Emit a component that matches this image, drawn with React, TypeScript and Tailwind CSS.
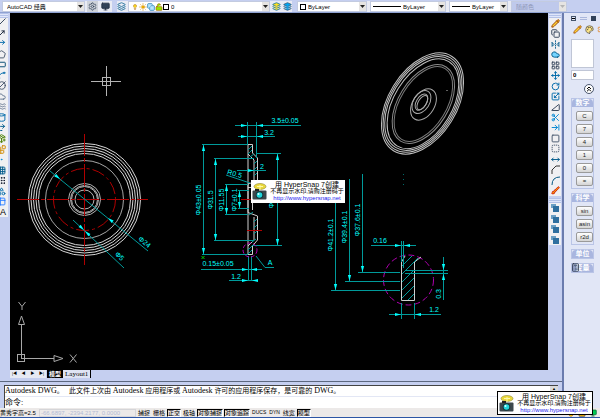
import React from "react";
import {
  Slash, MoveUpRight, CornerUpRight, Pentagon, RectangleHorizontal, Spline, CircleSlash2, Cloud, Waves, Cylinder,
  Redo2, PackagePlus, Blocks, Dot, Grid3x3, Grip, Shapes, Table2, Copy, FlipHorizontal2, Layers, LayoutGrid,
  Move, RotateCw, Scaling, TriangleRight, Scissors, ArrowRightToLine, SquareDashed, Square, MoveHorizontal,
  Brush, Settings, Monitor, Lightbulb, Sun, LockOpen, Palette, ChevronsUp, Calculator, Pencil, Shield,
} from "lucide-react";

const drawTools = [
  { name: "Line", icon: Slash, color: "text-slate-700" },
  { name: "Construction line", icon: MoveUpRight, color: "text-slate-800" },
  { name: "Polyline", icon: CornerUpRight, color: "text-sky-700" },
  { name: "Polygon", icon: Pentagon, color: "text-slate-600" },
  { name: "Rectangle", icon: RectangleHorizontal, color: "text-sky-900" },
  { name: "Arc", icon: Spline, color: "text-sky-700" },
  { name: "Circle", icon: CircleSlash2, color: "text-slate-600" },
  { name: "Revision cloud", icon: Cloud, color: "text-slate-500" },
  { name: "Spline", icon: Waves, color: "text-slate-500" },
  { name: "Ellipse", icon: Cylinder, color: "text-sky-700" },
  { name: "Ellipse arc", icon: Redo2, color: "text-sky-800" },
  { name: "Insert block", icon: PackagePlus, color: "text-lime-700" },
  { name: "Make block", icon: Blocks, color: "text-yellow-600" },
  { name: "Point", icon: Dot, color: "text-sky-600" },
  { name: "Hatch", icon: Grid3x3, color: "text-sky-800" },
  { name: "Gradient", icon: Grip, color: "text-slate-900" },
  { name: "Region", icon: Shapes, color: "text-sky-700" },
  { name: "Table", icon: Table2, color: "text-blue-500" },
];

const modifyTools = [
  { name: "Erase", icon: Pencil, color: "fill-amber-300 text-amber-800" },
  { name: "Copy", icon: Copy, color: "text-slate-700" },
  { name: "Mirror", icon: FlipHorizontal2, color: "text-sky-800" },
  { name: "Offset", icon: Cloud, color: "fill-sky-300 text-sky-800" },
  { name: "Array", icon: LayoutGrid, color: "text-slate-700" },
  { name: "Move", icon: Move, color: "text-sky-700" },
  { name: "Rotate", icon: RotateCw, color: "text-sky-700" },
  { name: "Scale", icon: Scaling, color: "text-sky-700" },
  { name: "Stretch", icon: TriangleRight, color: "text-slate-700" },
  { name: "Trim", icon: Scissors, color: "text-sky-600" },
  { name: "Extend", icon: ArrowRightToLine, color: "text-sky-600" },
  { name: "Break at point", icon: Square, color: "text-slate-600" },
  { name: "Break", icon: SquareDashed, color: "text-slate-600" },
  { name: "Join", icon: MoveHorizontal, color: "text-sky-800" },
];

const orderTools = ["Bring to front", "Send to back", "Bring above", "Send under"];

const statusButtons = [
  { label: "捕捉", on: false },
  { label: "栅格", on: false },
  { label: "正交", on: true },
  { label: "极轴", on: false },
  { label: "对象捕捉", on: true },
  { label: "对象追踪", on: true },
  { label: "DUCS", on: false },
  { label: "DYN", on: false },
  { label: "线宽", on: false },
  { label: "模型", on: true },
];

function Combo({ label, value, className, children, disabled = false }: {
  label: string; value: string; className: string; children?: React.ReactNode; disabled?: boolean;
}) {
  return (
    <div className={`flex h-[11px] items-center border border-[#c3cbe0] pl-[2px] ${disabled ? "bg-[#bfc9ec] text-[#8f98b8]" : "bg-white text-black"} ${className}`}>
      {children}
      <select aria-label={label} disabled={disabled} className="h-full min-w-0 flex-1 appearance-none bg-transparent px-[2px] text-[6px] leading-none opacity-100 outline-none">
        <option>{value}</option>
      </select>
      <span className="flex h-full w-[7px] items-center justify-center bg-[#e6e4e2]">
        <svg viewBox="0 0 5 3" className="h-[3px] w-[5px]" fill={disabled ? "#b5b5b5" : "#222"}><path d="M0 0h5L2.5 3z" /></svg>
      </span>
    </div>
  );
}

function ToolGrip() {
  return (
    <div className="flex h-[5px] flex-col justify-between border-y border-[#b4c2e8] bg-[#dfe6fa] py-px">
      <span className="h-px bg-[#b4c2e8]" />
    </div>
  );
}

// Dimension arrowhead, tip at x,y and pointing along angle a
function Arrow({ x, y, a }: { x: number; y: number; a: number }) {
  return <path d="M0 0L-6 -1.6V1.6Z" fill="#00ffff" stroke="none" transform={`translate(${x} ${y}) rotate(${a})`} />;
}

function Dim({ x, y, a = 0, children }: { x: number; y: number; a?: number; children: string }) {
  return (
    <text textAnchor="middle" fontSize="7" fill="#00ffff" stroke="none" transform={`translate(${x} ${y}) rotate(${a})`}>
      {children}
    </text>
  );
}

function FrontView() {
  return (
    <g>
      <g stroke="#d6d6d6">
        {[56, 53.5, 51, 48.5, 46].map((r) => <circle key={r} cx="84.5" cy="199.5" r={r} />)}
        <circle cx="84.5" cy="199.5" r="39" stroke="#a5a5a5" />
        {[16, 14, 13, 9.5].map((r) => <circle key={r} cx="84.5" cy="199.5" r={r} stroke="#b5b5b5" />)}
      </g>
      <g stroke="#b00000">
        <circle cx="84.5" cy="199.5" r="31" strokeDasharray="13 3 3 3" />
        <path d="M17 199.5H148M84.5 134V265" strokeDasharray="22 2 4 2" />
      </g>
      <path d="M50 171L148 251M73 220L124 268" stroke="#009a9a" />
      <Arrow x={60} y={179} a={39} />
      <Arrow x={108} y={218} a={219} />
      <Arrow x={84} y={230} a={43} />
      <Arrow x={85} y={231} a={223} />
      <Dim x={143} y={244} a={39}>Φ24</Dim>
      <Dim x={118} y={258} a={43}>Φ5</Dim>
    </g>
  );
}

function SectionView() {
  return (
    <g>
      <path
        d="M248 144.5H252.5V153L257.5 158V184M248 144.5V254.5H252.5V246L257.5 240V216L248 212.5V184L254 182V160L248 154M254 217V240L248 246M248 187.5H252.5V210"
        stroke="#cfcfcf"
      />
      <path
        d="M248 150l4-4M248 154l4-4M250 157l4-3M254 164l3-3M254 170l3-3M254 176l3-3M249 215l4-3M254 222l3-3M254 228l3-3M254 234l3-3M252 242l4-3M248 250l4-4M248 254l4-4"
        stroke="#009a9a"
      />
      <path
        d="M235 125.5H301M238 136.5H275M247.5 122V144M256.5 122V158M202 144.5H248M202 254.5H248M203.5 144V255M214 158.5H254M214 240.5H254M215.5 158V241M225 184.5H248M225 214.5H248M226.5 184V214M238 190.5H249M238 208.5H249M239.5 190V209M237 170.5H266M226 175L250 183M257 153.5H281M252 245.5H282M277.5 153V246M201 269.5H262M229 280.5H257M248.5 256V281M251.5 256V281M256 256L265 267.5H274"
        stroke="#009a9a"
      />
      <path d="M241 199.5H252M247 230.5H262" stroke="#b00000" />
      <circle cx="250" cy="250" r="7" stroke="#b000b0" strokeDasharray="4 2" />
      <path d="M201.5 256l3 3M204.5 256l-3 3" stroke="#00c800" />
      <Arrow x={247} y={125.5} a={0} />
      <Arrow x={257} y={125.5} a={180} />
      <Arrow x={247} y={136.5} a={0} />
      <Arrow x={257} y={136.5} a={180} />
      <Arrow x={254} y={170.5} a={0} />
      <Arrow x={203.5} y={145} a={270} />
      <Arrow x={203.5} y={254} a={90} />
      <Arrow x={215.5} y={159} a={270} />
      <Arrow x={215.5} y={240} a={90} />
      <Arrow x={226.5} y={185} a={270} />
      <Arrow x={226.5} y={214} a={90} />
      <Arrow x={239.5} y={191} a={270} />
      <Arrow x={239.5} y={208} a={90} />
      <Arrow x={277.5} y={154} a={270} />
      <Arrow x={277.5} y={245} a={90} />
      <Arrow x={248} y={269.5} a={0} />
      <Arrow x={251} y={269.5} a={180} />
      <Arrow x={248} y={280.5} a={0} />
      <Arrow x={252} y={280.5} a={180} />
      <Dim x={285} y={123}>3.5±0.05</Dim>
      <Dim x={269} y={135}>3.2</Dim>
      <Dim x={262} y={169}>2</Dim>
      <Dim x={234} y={176} a={15}>R0.5</Dim>
      <Dim x={201} y={200} a={-90}>Φ43±0.05</Dim>
      <Dim x={213} y={200} a={-90}>Φ31.5</Dim>
      <Dim x={224} y={200} a={-90}>Φ11.55</Dim>
      <Dim x={237} y={200} a={-90}>Φ7±0.1</Dim>
      <Dim x={274} y={195} a={-90}>Φ35±0.1</Dim>
      <Dim x={218} y={266}>0.15±0.05</Dim>
      <Dim x={236} y={279}>1.2</Dim>
      <Dim x={270} y={265}>A</Dim>
    </g>
  );
}

function DetailView() {
  return (
    <g>
      <circle cx="408.5" cy="280" r="25" stroke="#b000b0" strokeDasharray="6 3" />
      <path d="M405 256L401.5 262V300.5H414.5V262L421 257" stroke="#cfcfcf" />
      <path d="M402 266l10-10M402 274l16-16M402 282l12-12M402 290l12-12M402 298l12-12M408 300l6-6" stroke="#009a9a" />
      <path
        d="M335.5 202V290M349.5 179V281M362.5 174V272M331 290.5H400M345 281.5H400M358 272.5H400M371 245.5H416M401.5 241V262M403.5 241V268M443.5 257V300M405 270.5H448M405 273.5H448M389 314.5H441M401.5 303V319M414.5 303V319"
        stroke="#009a9a"
      />
      <path d="M403.5 174v1M403.5 179v1M403.5 184v1" stroke="#006a6a" />
      <Arrow x={335.5} y={290} a={90} />
      <Arrow x={349.5} y={281} a={90} />
      <Arrow x={362.5} y={272} a={90} />
      <Arrow x={401} y={245.5} a={0} />
      <Arrow x={404} y={245.5} a={180} />
      <Arrow x={443.5} y={270} a={90} />
      <Arrow x={443.5} y={274} a={270} />
      <Arrow x={401} y={314.5} a={0} />
      <Arrow x={415} y={314.5} a={180} />
      <Dim x={333} y={235} a={-90}>Φ41.2±0.1</Dim>
      <Dim x={347} y={227} a={-90}>Φ39.4±0.1</Dim>
      <Dim x={360} y={220} a={-90}>Φ37.6±0.1</Dim>
      <Dim x={380} y={243}>0.16</Dim>
      <Dim x={441} y={294} a={-90}>0.3</Dim>
      <Dim x={434} y={312}>1.2</Dim>
    </g>
  );
}

function IsoView() {
  return (
    <g stroke="#c0c0c0">
      <g transform="translate(422.5 103.5) rotate(31.6)">
        <ellipse rx="34" ry="55.5" />
        <ellipse rx="32.5" ry="53.5" />
        <ellipse rx="31" ry="51.5" />
        <ellipse cx="0.5" rx="29" ry="49.5" />
        <ellipse cx="1" rx="25" ry="43.5" stroke="#8a8a8a" />
        <ellipse cx="1" rx="23" ry="41.5" stroke="#7a7a7a" />
      </g>
      <g transform="translate(423.5 104.5) rotate(31.6)" stroke="#a8a8a8">
        <ellipse rx="11" ry="17" />
        <ellipse cx="-3" cy="-1" rx="8" ry="12.5" />
        <ellipse cx="-3" cy="-1" rx="5" ry="9" />
        <ellipse cx="-2" cy="-1" rx="4" ry="8" />
      </g>
      <path d="M447 90v1" />
    </g>
  );
}

function Drawing() {
  return (
    <svg viewBox="10 13 538 357" preserveAspectRatio="xMidYMid meet" className="block h-full w-full font-['Liberation_Sans',sans-serif]" fill="none" strokeWidth="1">
      <g stroke="#b4b4b4">
        <path d="M91 81.5H121M106.5 66V96" />
        <rect x="102.5" y="77.5" width="8" height="8" />
      </g>
      <g stroke="#a8a8a8">
        <rect x="17.5" y="354.5" width="7" height="7" />
        <path d="M21.5 358V324M21 358.5H54M54 355.5L63 358.5L54 361.5ZM18.5 324.5L21.5 316L24.5 324.5Z" />
        <path d="M18.5 302L22 306.5V310M25.5 302L22 306.5M70 354.5L76.5 362.5M76.5 354.5L70 362.5" />
      </g>
      <FrontView />
      <SectionView />
      <DetailView />
      <IsoView />
    </svg>
  );
}

function Stamp({ className }: { className: string }) {
  return (
    <div className={`flex items-center justify-center gap-[3px] bg-white text-black ${className}`}>
      <svg viewBox="0 0 15 17" className="h-[17px] w-[15px] shrink-0">
        <ellipse cx="8" cy="3.5" rx="6" ry="3" fill="#e9d83c" stroke="#8d8430" strokeWidth="0.6" />
        <path d="M5 3.5h6M8 2v5" stroke="#fff9a8" />
        <rect x="0.5" y="7.5" width="14" height="9" rx="1" fill="#3c474c" />
        <rect x="3" y="6" width="4" height="2" fill="#222" />
        <circle cx="7.5" cy="12" r="3.8" fill="#11363c" />
        <circle cx="7.5" cy="12" r="2.8" fill="#22d6dc" />
        <circle cx="6.5" cy="11" r="1" fill="#d8ffff" />
      </svg>
      <div className="flex flex-col items-center whitespace-nowrap text-[6px] leading-[7px]">
        <span className="text-[7px]">用 HyperSnap 7创建</span>
        <span>不再显示水印,请购注册码于</span>
        <a href="#" className="text-[#2222ee]">http://www.hypersnap.net</a>
      </div>
    </div>
  );
}

function KeyGroup({ title, keys }: { title: string; keys: string[] }) {
  return (
    <section className="border border-[#b9c4e6]">
      <h2 className="h-[8px] rounded-t bg-[#a9b6df] text-center text-[7px] leading-[8px] font-bold text-white">{title}</h2>
      {keys.length > 0 && (
        <div className="flex flex-col gap-[3px] pt-[4px] pb-[2px] pl-[4px]">
          {keys.map((k) => (
            <button key={k} className="h-[10px] rounded-[2px] border border-[#9a9a9a] bg-gradient-to-b from-white to-[#d4d4d4] text-[6px] leading-none text-[#222]">{k}</button>
          ))}
        </div>
      )}
    </section>
  );
}

export default function App() {
  return (
    <div className="relative flex h-screen flex-col overflow-hidden bg-[#c5cff0] font-['Liberation_Sans','Noto_Sans_CJK_SC',sans-serif] text-[6px] leading-none text-black">
      {/* Top toolbars */}
      <header className="flex h-[13px] shrink-0 items-start gap-[5px] border-b border-[#8fa2d2] pt-px pl-[2px]">
        <div className="flex items-center gap-[2px] bg-[#e9ebf4] pr-px">
          <Combo label="Workspace" value="AutoCAD 经典" className="w-[83px]" />
          <button aria-label="Workspace settings" className="bg-[#cfd3da] p-px"><Settings className="h-[9px] w-[9px] text-slate-700" /></button>
          <button aria-label="My workspace" className="p-px"><Monitor className="h-[9px] w-[9px] fill-slate-700 text-slate-800" /></button>
        </div>
        <div className="flex items-center gap-[2px] bg-[#e9ebf4]">
          <button aria-label="Layer properties"><Layers className="h-[9px] w-[9px] text-sky-800" /></button>
          <Combo label="Layer" value="0" className="w-[142px]">
            <Lightbulb className="ml-px h-[8px] w-[6px] fill-yellow-300 text-yellow-700" />
            <Sun className="ml-px h-[8px] w-[8px] fill-yellow-400 text-yellow-600" />
            <Copy className="h-[8px] w-[8px] fill-sky-200 text-sky-700" />
            <LockOpen className="h-[8px] w-[8px] fill-lime-400 text-yellow-700" />
            <span className="h-[6px] w-[6px] border border-black bg-white" />
          </Combo>
          <button aria-label="Make object's layer current"><Layers className="h-[9px] w-[9px] fill-yellow-300 text-sky-700" /></button>
          <button aria-label="Layer previous"><Layers className="h-[9px] w-[9px] fill-sky-500 text-slate-600" /></button>
        </div>
        <div className="flex items-center gap-[3px] bg-[#e9ebf4]">
          <Combo label="Color" value="ByLayer" className="w-[70px]"><span className="h-[6px] w-[6px] border border-black" /></Combo>
          <Combo label="Linetype" value="ByLayer" className="w-[76px]"><span className="h-px w-[28px] bg-black" /></Combo>
          <Combo label="Lineweight" value="ByLayer" className="w-[59px]"><span className="h-px w-[18px] bg-black" /></Combo>
          <Combo label="Plot style" value="随颜色" className="w-[56px]" disabled />
        </div>
      </header>

      <div className="flex min-h-0 flex-1">
        <div className="flex min-w-0 flex-1 flex-col">
          <div className="flex min-h-0 flex-1">
            {/* Draw toolbar */}
            <div className="w-[10px] shrink-0 overflow-hidden pr-[2px]">
              <ToolGrip />
              <div className="flex h-[199px] flex-col items-end justify-between bg-[#f0f0f2] pr-[2px]">
                {drawTools.map(({ name, icon: Icon, color }) => (
                  <button key={name} aria-label={name} className="flex"><Icon className={`h-[9px] w-[9px] ${color}`} strokeWidth={2.5} /></button>
                ))}
                <button aria-label="Multiline text" className="text-[9px] leading-none">A</button>
              </div>
            </div>

            {/* Model space */}
            <main className="flex min-w-0 flex-1 flex-col">
              <div className="relative min-h-0 flex-1 bg-black">
                <Drawing />
                <Stamp className="absolute top-[167px] left-[241px] h-[23px] w-[94px]" />
              </div>
              <nav className="flex h-[8px] shrink-0 items-center bg-[#c5cff0]">
                {["|◀", "◀", "▶", "▶|"].map((t) => (
                  <button key={t} className="h-full w-[9px] bg-[#e6e9f3] text-[4px] leading-none">{t}</button>
                ))}
                <button className="ml-px h-full bg-black px-[2px] font-bold text-white">模型</button>
                <button className="h-full border-r border-black bg-[#dfe4f4] px-[2px] font-['Liberation_Serif',serif] text-[7px]">Layout1</button>
              </nav>
            </main>

            {/* Modify toolbar */}
            <div className="w-[14px] shrink-0 px-px">
              <ToolGrip />
              <div className="flex h-[178px] flex-col items-center justify-between bg-[#f0f0f2] py-px">
                {modifyTools.map(({ name, icon: Icon, color }) => (
                  <button key={name} aria-label={name} className="flex"><Icon className={`h-[9px] w-[9px] ${color}`} strokeWidth={2.5} /></button>
                ))}
                <button aria-label="Chamfer">
                  <svg viewBox="0 0 9 9" className="h-[9px] w-[9px]" fill="none" stroke="#333"><path d="M1 9V5L5 1H9" /></svg>
                </button>
                <button aria-label="Fillet">
                  <svg viewBox="0 0 9 9" className="h-[9px] w-[9px]" fill="none" stroke="#075985"><path d="M1 9Q1 1 9 1" /></svg>
                </button>
                <button aria-label="Explode"><Brush className="h-[9px] w-[9px] fill-amber-500 text-red-700" /></button>
              </div>
              <div className="mt-[2px]"><ToolGrip /></div>
              <div className="flex h-[42px] flex-col items-center justify-around bg-[#f0f0f2]">
                {orderTools.map((name) => (
                  <button key={name} aria-label={name}>
                    <svg viewBox="0 0 8 8" className="h-[8px] w-[8px]"><path d="M0 0h5v4H0z" fill="#6b9fc4" /><path d="M2 2h6v6H2z" fill="#2f6f9f" /></svg>
                  </button>
                ))}
              </div>
            </div>
          </div>

          {/* Command window */}
          <div className="mt-[3px] flex h-[27px] shrink-0 flex-col border-t border-[#5c6880] bg-[#c5cff0] pt-[3px] font-['Liberation_Serif','Noto_Sans_CJK_SC',serif] text-[8px]">
            <div className="mr-[4px] ml-[4px] flex min-h-0 flex-1 border-t border-l border-[#444] bg-white">
              <div className="min-w-0 flex-1">
                <p className="h-[11px] border-b border-[#e3e7f5] text-[7px] leading-[9px] whitespace-pre">
                  <span className="text-[8px]">Autodesk DWG</span>。   此文件上次由 <span className="text-[8px]">Autodesk</span> 应用程序或 <span className="text-[8px]">Autodesk</span> 许可的应用程序保存，是可靠的 <span className="text-[8px]">DWG</span>。
                </p>
                <label className="flex h-[11px] items-center">
                  命令:
                  <input className="min-w-0 flex-1 px-1 outline-none" />
                </label>
              </div>
              <button aria-label="Scroll up" className="h-[6px] w-[8px] bg-[#dcdcdc] text-[4px] leading-none">▲</button>
            </div>
          </div>
        </div>

        {/* Calculator palette */}
        <aside className="w-[38px] shrink-0 overflow-hidden border-l-2 border-[#6b7cae] bg-[#e1e6f6] pt-[3px] pl-[7px]">
          <div className="flex items-center gap-[4px]">
            <button aria-label="Minimize" className="flex h-[5px] w-[5px] items-center border border-slate-600"><span className="h-px w-full bg-black" /></button>
            <span className="h-[3px] flex-1 border-y border-[#aab7dc]" />
            <button aria-label="Close" className="mr-[4px] h-[5px] w-[5px] bg-slate-700" />
          </div>
          <div className="mt-[4px] flex w-[34px] items-center gap-[3px] pl-[2px]">
            <Pencil className="h-[9px] w-[9px] shrink-0 fill-amber-300 text-amber-800" />
            <Palette className="h-[9px] w-[9px] shrink-0 fill-amber-200 text-stone-600" />
            <Settings className="h-[9px] w-[9px] shrink-0 text-amber-600" />
          </div>
          <div className="mt-[5px] mr-[6px]">
            <textarea aria-label="History" className="block h-[29px] w-full resize-none border border-[#c0c6d6] bg-white" />
            <input aria-label="Expression" defaultValue="0" className="mt-[2px] block h-[10px] w-full border border-[#c0c6d6] bg-white px-px text-[6px] font-bold" />
            <button aria-label="Less" className="mt-[4px] ml-auto flex h-[10px] w-[10px] items-center justify-center rounded-full border border-[#49566f] bg-white">
              <ChevronsUp className="h-[8px] w-[8px]" strokeWidth={3} />
            </button>
            <div className="mt-[4px] flex flex-col gap-[4px]">
              <KeyGroup title="数字" keys={["C", "7", "4", "1", "0", "="]} />
              <KeyGroup title="科学" keys={["sin", "asin", "r2d"]} />
              <KeyGroup title="单位" keys={[]} />
              <div className="relative">
                <KeyGroup title="变量" keys={[]} />
                <Calculator className="absolute top-0 left-0 h-[9px] w-[9px] text-slate-800" />
              </div>
            </div>
          </div>
        </aside>
      </div>

      {/* Status bar */}
      <footer className="flex h-[10px] shrink-0 items-center gap-px border-b border-[#2c55a5] bg-[#ece9e8]">
        <span className="w-[38px] shrink-0 whitespace-nowrap">黄秀字高=2.5</span>
        <span className="h-[8px] w-[97px] shrink-0 border border-[#d5d5d8] px-px leading-[7px] whitespace-nowrap text-[#b3bbd4]">-66.6897, -2394.2177, 0.0000</span>
        {statusButtons.map((b) => (
          <button key={b.label} aria-pressed={b.on} className={`h-[8px] border px-0 leading-none whitespace-nowrap ${b.on ? "border-t-black border-r-white border-b-white border-l-black bg-[#e4e2e0]" : "border-transparent"} ${/^D/.test(b.label) ? "text-[5px]" : ""}`}>
            {b.label}
          </button>
        ))}
        <span className="ml-auto flex items-center gap-[3px] pr-[3px]">
          <Shield className="h-[8px] w-[8px] fill-yellow-400 text-yellow-700" />
          <LockOpen className="h-[8px] w-[8px] fill-yellow-500 text-stone-700" />
          <Monitor className="h-[8px] w-[8px] fill-green-500 text-green-800" />
        </span>
      </footer>

      <Stamp className="absolute right-[7px] bottom-[3px] h-[24px] w-[96px] border border-black" />
    </div>
  );
}
